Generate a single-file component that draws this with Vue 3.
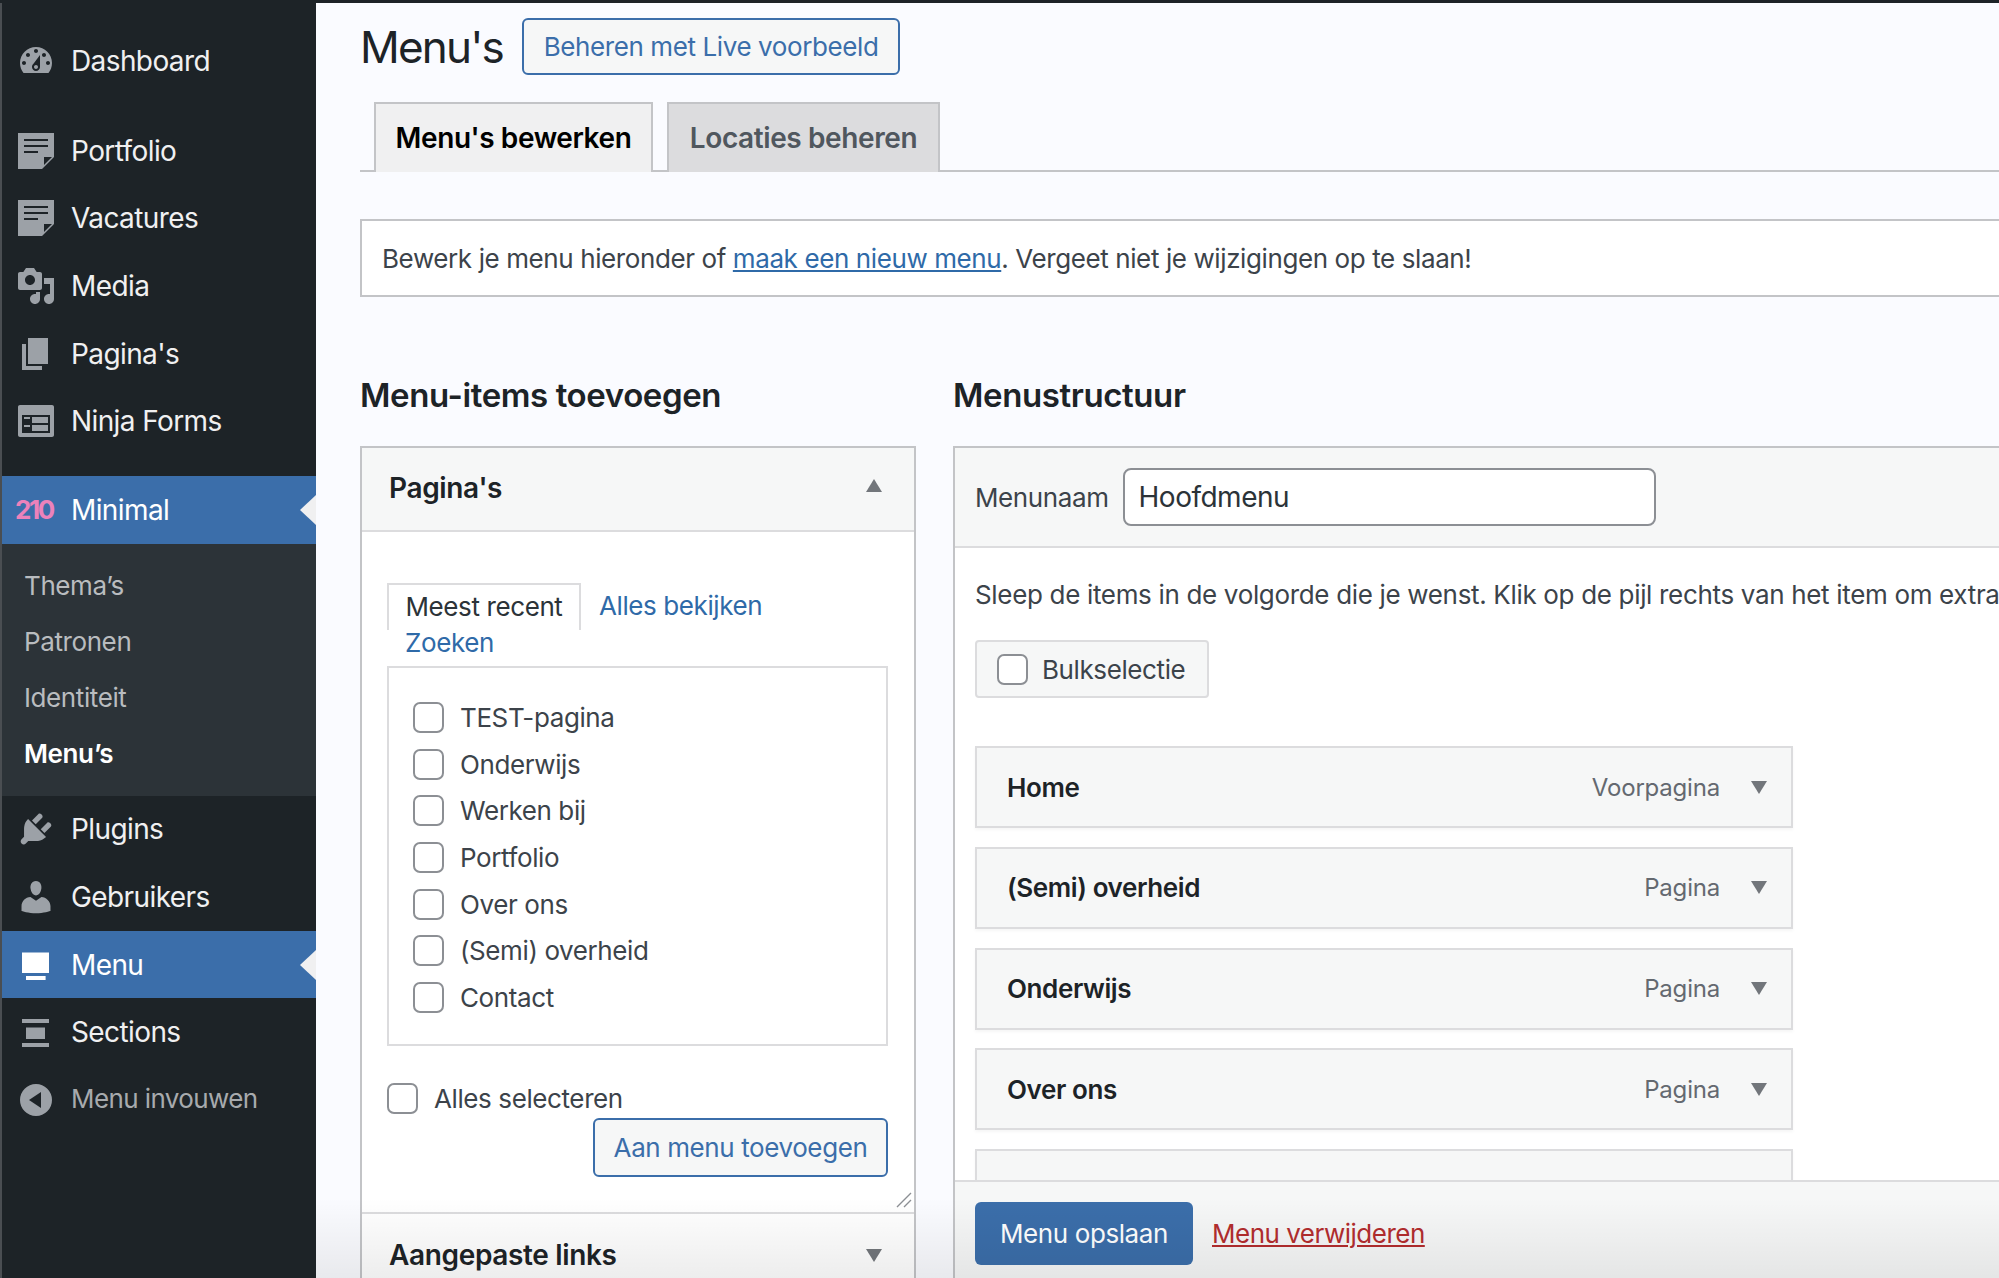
<script setup>
const icons = {
  dashboard: 'M3.76 16h12.48c1.1-1.37 1.76-3.11 1.76-5 0-4.42-3.58-8-8-8s-8 3.58-8 8c0 1.89.66 3.63 1.76 5zM10 4c.55 0 1 .45 1 1s-.45 1-1 1-1-.45-1-1 .45-1 1-1zM6 6c.55 0 1 .45 1 1s-.45 1-1 1-1-.45-1-1 .45-1 1-1zm8 0c.55 0 1 .45 1 1s-.45 1-1 1-1-.45-1-1 .45-1 1-1zm-5.37 5.55L12 7v6c0 1.1-.9 2-2 2s-2-.9-2-2c0-.57.24-1.08.63-1.45zM4 10c.55 0 1 .45 1 1s-.45 1-1 1-1-.45-1-1 .45-1 1-1zm12 0c.55 0 1 .45 1 1s-.45 1-1 1-1-.45-1-1 .45-1 1-1zm-5 3c0-.55-.45-1-1-1s-1 .45-1 1 .45 1 1 1 1-.45 1-1z',
  note: 'M1 1h18v12l-6 6H1V1zm3 3v1h12V4H4zm0 3v1h12V7H4zm0 3v1h7v-1H4zm10 7l4-4h-4v4z',
  media: 'M13 11V4c0-.55-.45-1-1-1h-1.67L9 1H5L3.67 3H2c-.55 0-1 .45-1 1v7c0 .55.45 1 1 1h10c.55 0 1-.45 1-1zM7 4.5c1.38 0 2.5 1.12 2.5 2.5S8.38 9.5 7 9.5 4.5 8.38 4.5 7 5.62 4.5 7 4.5zM14 6h5v10.5c0 1.38-1.12 2.5-2.5 2.5S14 17.88 14 16.5s1.12-2.5 2.5-2.5c.17 0 .34.02.5.05V9h-3V6zm-4 8.05V13h2v3.5c0 1.38-1.12 2.5-2.5 2.5S7 17.88 7 16.5 8.12 14 9.5 14c.17 0 .34.02.5.05z',
  page: 'M6 15V2h10v13H6zm-1 1h8v2H3V5h2v11z',
  forms: 'M2 2h16c.55 0 1 .45 1 1v14c0 .55-.45 1-1 1H2c-.55 0-1-.45-1-1V3c0-.55.45-1 1-1zm15 14V7H3v9h14zM4 8v1h3V8H4zm4 0v3h8V8H8zm-4 4v1h3v-1H4zm4 0v3h8v-3H8z',
  plugin: 'M13.11 4.36L9.87 7.6 8 5.73l3.24-3.24c.35-.34 1.05-.2 1.56.32.52.51.66 1.21.31 1.55zm-8 1.77l.91-1.12 9.01 9.01-1.19.84c-.71.71-2.63 1.16-3.82 1.16H6.14L4.9 17.26c-.59.59-1.54.59-2.12 0-.59-.58-.59-1.53 0-2.12l1.24-1.24v-3.88c0-1.13.4-3.19 1.09-3.89zm7.26 3.97l3.24-3.24c.34-.35 1.04-.21 1.55.31.52.51.66 1.21.31 1.55l-3.24 3.25z',
  users: 'M10 9.25c-2.27 0-2.73-3.44-2.73-3.44C7 4.02 7.82 2 9.97 2c2.16 0 2.98 2.02 2.71 3.81 0 0-.41 3.44-2.68 3.44zm0 2.57L12.72 10c2.39 0 4.52 2.33 4.52 4.53v2.49s-3.65 1.13-7.24 1.13c-3.65 0-7.24-1.13-7.24-1.13v-2.49c0-2.25 1.94-4.48 4.47-4.48z',
  monitor: 'M3 3.75h13.5V14H3zM5 15.5h9.8v2H5z',
  sections: 'M3 3.5h13.5v2H3zM5 7.7h9.5v5.8H5zM3 15.5h13.5v2H3z',
  collapse: 'M10 2a8 8 0 1 1 0 16 8 8 0 0 1 0-16zM12.5 6L6.5 10l6 4z'
}
const topItems = [
  { label: 'Portfolio', icon: 'note' },
  { label: 'Vacatures', icon: 'note' },
  { label: 'Media', icon: 'media' },
  { label: "Pagina's", icon: 'page' },
  { label: 'Ninja Forms', icon: 'forms' }
]
const subItems = ['Thema’s', 'Patronen', 'Identiteit', 'Menu’s']
const lowerItems = [
  { label: 'Plugins', icon: 'plugin' },
  { label: 'Gebruikers', icon: 'users' },
  { label: 'Menu', icon: 'monitor', active: true },
  { label: 'Sections', icon: 'sections' }
]
const pages = ['TEST-pagina', 'Onderwijs', 'Werken bij', 'Portfolio', 'Over ons', '(Semi) overheid', 'Contact']
const menuItems = [
  { title: 'Home', type: 'Voorpagina' },
  { title: '(Semi) overheid', type: 'Pagina' },
  { title: 'Onderwijs', type: 'Pagina' },
  { title: 'Over ons', type: 'Pagina' },
  { title: '', type: '' }
]
</script>

<template>
  <div class="app">
    <aside class="sidebar">
      <a class="row first">
        <svg class="ico" viewBox="0 0 20 20"><path fill-rule="evenodd" :d="icons.dashboard" /></svg>
        <span>Dashboard</span>
      </a>
      <div class="sep-a"></div>
      <a v-for="item in topItems" :key="item.label" class="row">
        <svg class="ico" viewBox="0 0 20 20"><path fill-rule="evenodd" :d="icons[item.icon]" /></svg>
        <span>{{ item.label }}</span>
      </a>
      <div class="sep-b"></div>
      <a class="row active">
        <span class="num">210</span>
        <span>Minimal</span>
      </a>
      <div class="submenu">
        <a v-for="(s, i) in subItems" :key="s" class="sub" :class="{ current: i === 3 }">{{ s }}</a>
      </div>
      <a v-for="item in lowerItems" :key="item.label" class="row" :class="{ active: item.active }">
        <svg class="ico" viewBox="0 0 20 20"><path fill-rule="evenodd" :d="icons[item.icon]" /></svg>
        <span>{{ item.label }}</span>
      </a>
      <a class="row collapse">
        <svg class="ico" viewBox="0 0 20 20"><path fill-rule="evenodd" :d="icons.collapse" /></svg>
        <span>Menu invouwen</span>
      </a>
    </aside>

    <main class="main">
      <div class="wrap">
        <div class="title-row">
          <h1>Menu's</h1>
          <a class="btn-outline live">Beheren met Live voorbeeld</a>
        </div>

        <nav class="tabs">
          <a class="tab on">Menu's bewerken</a>
          <a class="tab">Locaties beheren</a>
        </nav>

        <div class="notice">
          Bewerk je menu hieronder of <a class="link">maak een nieuw menu</a>. Vergeet niet je wijzigingen op te slaan!
        </div>

        <div class="columns">
          <section class="col-left">
            <h2>Menu-items toevoegen</h2>
            <div class="box">
              <header class="acc-head">
                <h3>Pagina's</h3>
                <span class="tri up"></span>
              </header>
              <div class="acc-body">
                <div class="mini-tabs">
                  <span class="mini on">Meest recent</span>
                  <a class="mini-link">Alles bekijken</a>
                  <a class="mini-link zoek">Zoeken</a>
                </div>
                <ul class="list">
                  <li v-for="p in pages" :key="p">
                    <input type="checkbox" class="cb" />
                    <span>{{ p }}</span>
                  </li>
                </ul>
                <label class="select-all">
                  <input type="checkbox" class="cb" />
                  <span>Alles selecteren</span>
                </label>
                <div class="add-row">
                  <a class="btn-outline add">Aan menu toevoegen</a>
                </div>
                <svg class="grip" viewBox="0 0 16 16">
                  <path d="M1 15L15 1M8 15l7-7" stroke="#8c8f94" stroke-width="1.4" fill="none" />
                </svg>
              </div>
              <header class="acc-head second">
                <h3>Aangepaste links</h3>
                <span class="tri"></span>
              </header>
            </div>
          </section>

          <section class="col-right">
            <h2>Menustructuur</h2>
            <div class="box edit">
              <header class="edit-head">
                <label class="name-label">Menunaam</label>
                <input class="name-input" value="Hoofdmenu" />
              </header>
              <div class="edit-body">
                <p class="hint">Sleep de items in de volgorde die je wenst. Klik op de pijl rechts van het item om extra configuratie-opties te tonen.</p>
                <label class="bulk">
                  <input type="checkbox" class="cb" />
                  <span>Bulkselectie</span>
                </label>
                <div v-for="(m, i) in menuItems" :key="i" class="item">
                  <strong>{{ m.title }}</strong>
                  <span class="type">{{ m.type }}</span>
                  <span v-if="m.title" class="tri"></span>
                </div>
              </div>
              <footer class="edit-foot">
                <a class="btn-primary">Menu opslaan</a>
                <a class="delete">Menu verwijderen</a>
              </footer>
            </div>
          </section>
        </div>
      </div>
      <div class="shade"></div>
    </main>
  </div>
</template>

<style>
html, body { margin: 0; overflow: hidden; background: #fafbff; }
</style>

<style scoped>
* { box-sizing: border-box; }
.app {
  display: flex;
  width: 1999px;
  height: 1278px;
  overflow: hidden;
  background: #fafbff;
  border-top: 3px solid #1d2327;
  font-family: Inter, "Liberation Sans", sans-serif;
  font-size: 26px;
  letter-spacing: -0.4px;
  color: #3c434a;
}
.sidebar {
  flex: 0 0 316px;
  background: #1d2327;
  border-left: 2px solid #4a4e52;
  display: flex;
  flex-direction: column;
  padding-top: 24px;
}
.row {
  position: relative;
  height: 67.6px;
  flex: none;
  display: flex;
  align-items: center;
  color: #f0f0f1;
  font-size: 28px;
  letter-spacing: -0.6px;
}
.row .ico {
  flex: none;
  width: 40px;
  height: 40px;
  margin: 0 15px 0 14px;
  fill: #9ca1a7;
}
.sep-a { height: 22.5px; flex: none; }
.sep-b { height: 21px; flex: none; }
.active { background: #3b6eaa; color: #fff; }
.active .ico { fill: #fff; }
.active::after {
  content: "";
  position: absolute;
  right: 0;
  top: 50%;
  margin-top: -15px;
  border: 15px solid transparent;
  border-left: 0;
  border-right: 16px solid #f0f0f1;
}
.num {
  flex: none;
  width: 41px;
  margin: 0 15px 0 13px;
  font-size: 26px;
  font-weight: 700;
  letter-spacing: -2.4px;
  color: #ec82bb;
}
.submenu {
  flex: none;
  height: 252px;
  background: #2c3338;
  padding-top: 14px;
  display: flex;
  flex-direction: column;
}
.sub {
  height: 56px;
  flex: none;
  line-height: 56px;
  padding-left: 22px;
  color: #b9bcbf;
  font-size: 26px;
  letter-spacing: -0.4px;
}
.sub.current { color: #fff; font-weight: 600; }
.collapse { color: #a7aaad; font-size: 26px; margin-top: -1px; }
.collapse .ico { margin-top: 2px; }

.main { position: relative; flex: 1; min-width: 0; overflow: hidden; }
.wrap { width: 1700px; margin-left: 44px; padding-top: 15px; }

.title-row { display: flex; align-items: center; gap: 19px; height: 57px; }
h1 { margin: 0; font-size: 44px; font-weight: 400; color: #1d2327; letter-spacing: -1.8px; }
.btn-outline {
  display: flex;
  align-items: center;
  justify-content: center;
  border: 2px solid #3b6eaa;
  border-radius: 6px;
  background: #f6f7f7;
  color: #3b6eaa;
}
.live { width: 378px; height: 57px; }

.tabs {
  display: flex;
  gap: 14px;
  height: 70px;
  margin-top: 27px;
  padding-left: 14px;
  border-bottom: 2px solid #c3c4c7;
}
.tab {
  width: 273px;
  height: 70px;
  display: flex;
  align-items: center;
  justify-content: center;
  background: #dcdcde;
  border: 2px solid #c3c4c7;
  border-bottom: 0;
  font-size: 28px;
  font-weight: 600;
  color: #50575e;
  letter-spacing: -0.4px;
}
.tab.on { width: 279px; background: #f0f0f1; color: #000; }

.notice {
  height: 78px;
  line-height: 76px;
  margin-top: 47px;
  padding-left: 20px;
  background: #fff;
  border: 2px solid #c3c4c7;
}
.link { color: #2f6aa8; text-decoration: underline; }

.columns { display: flex; gap: 37px; margin-top: 73px; }
.col-left { flex: 0 0 556px; }
.col-right { flex: 1; min-width: 0; }
h2 {
  margin: 0 0 26px;
  height: 50px;
  line-height: 50px;
  font-size: 33px;
  font-weight: 600;
  color: #1d2327;
  letter-spacing: -0.4px;
}
.box { background: #fff; border: 2px solid #c3c4c7; }

.acc-head {
  height: 84px;
  display: flex;
  align-items: center;
  justify-content: space-between;
  padding: 0 32px 2px 27px;
  background: #f6f7f7;
  border-bottom: 2px solid #dcdcde;
}
.acc-head.second { padding-bottom: 0; background: #fff; border-top: 2px solid #dcdcde; border-bottom: 0; }
h3 { margin: 0; font-size: 28px; font-weight: 600; color: #1d2327; letter-spacing: -0.35px; }
.tri {
  flex: none;
  width: 0;
  height: 0;
  border: 8px solid transparent;
  border-bottom: 0;
  border-top: 13px solid #72767b;
}
.tri.up { border-top: 0; border-bottom: 13px solid #72767b; margin-bottom: 5px; }

.acc-body { position: relative; height: 680px; padding: 51px 26px 0 25px; }
.mini-tabs { position: relative; height: 83px; }
.mini {
  position: absolute;
  left: 0;
  top: 0;
  width: 194px;
  height: 47px;
  padding-top: 6px;
  text-align: center;
  color: #2c3338;
  border: 2px solid #dcdcde;
  border-bottom: 0;
  background: #fff;
}
.mini-link { position: absolute; left: 212px; top: 7px; color: #2f6aa8; }
.mini-link.zoek { left: 18px; top: 44px; }
.list {
  list-style: none;
  margin: 0;
  padding: 26px 0 0 24px;
  height: 380px;
  border: 2px solid #dcdcde;
}
.list li { display: flex; align-items: center; gap: 16px; height: 46.7px; }
.cb {
  appearance: none;
  flex: none;
  width: 31px;
  height: 31px;
  margin: 0;
  background: #fff;
  border: 2px solid #8c8f94;
  border-radius: 7px;
}
.select-all {
  display: flex;
  align-items: center;
  gap: 16px;
  margin-top: 37px;
  height: 31px;
}
.add-row { display: flex; justify-content: flex-end; margin-top: 4px; }
.add { width: 295px; height: 59px; }
.grip { position: absolute; right: 2px; bottom: 4px; width: 16px; height: 16px; }

.edit { height: 834px; display: flex; flex-direction: column; border-right: 0; }
.edit-head {
  flex: none;
  height: 100px;
  display: flex;
  align-items: center;
  gap: 14px;
  padding-left: 20px;
  background: #f6f7f7;
  border-bottom: 2px solid #dcdcde;
}
.name-input {
  width: 533px;
  height: 58px;
  padding: 0 14px;
  background: #fff;
  border: 2px solid #8c8f94;
  border-radius: 8px;
  font: inherit;
  font-size: 28px;
  color: #2c3338;
  letter-spacing: -0.5px;
}
.edit-body { flex: 1; min-height: 0; overflow: hidden; padding: 27px 0 0 20px; }
.hint { margin: 0; white-space: nowrap; line-height: 40px; letter-spacing: -0.33px; }
.bulk {
  display: flex;
  align-items: center;
  gap: 14px;
  width: 234px;
  height: 58px;
  margin: 25px 0 48px;
  padding-left: 20px;
  background: #f6f7f7;
  border: 2px solid #dcdcde;
  border-radius: 4px;
}
.item {
  display: flex;
  align-items: center;
  width: 818px;
  height: 82px;
  margin-bottom: 18.8px;
  padding: 0 24px 0 30px;
  background: #f6f7f7;
  border: 2px solid #dcdcde;
  box-shadow: 0 2px 3px rgba(0, 0, 0, 0.04);
}
.item strong { font-weight: 600; color: #1d2327; }
.type { margin-left: auto; margin-right: 31px; color: #646970; font-size: 24px; letter-spacing: -0.2px; }
.edit-foot {
  flex: none;
  height: 98px;
  display: flex;
  align-items: center;
  gap: 19px;
  padding: 7px 0 0 20px;
  background: #f6f7f7;
  border-top: 2px solid #dcdcde;
}
.btn-primary {
  width: 218px;
  height: 63px;
  display: flex;
  align-items: center;
  justify-content: center;
  background: #3b6eaa;
  border-radius: 6px;
  color: #fff;
}
.delete { color: #b32d2e; text-decoration: underline; letter-spacing: -0.5px; }
.shade {
  position: absolute;
  left: 0;
  right: 0;
  bottom: 0;
  height: 80px;
  background: linear-gradient(rgba(0, 0, 0, 0), rgba(0, 0, 0, 0.07));
  pointer-events: none;
}
</style>
